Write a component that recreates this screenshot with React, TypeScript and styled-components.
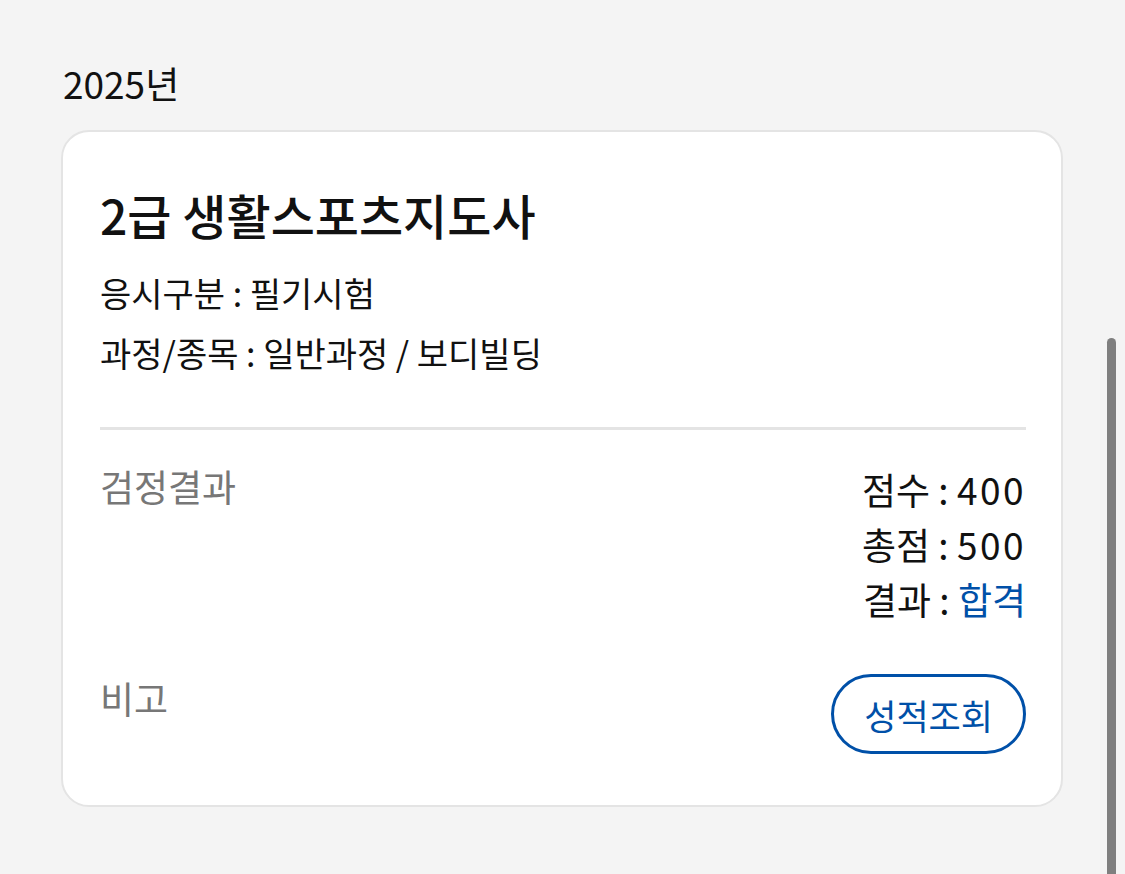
import React from 'react';
import styled, { createGlobalStyle } from 'styled-components';

const GlobalStyle = createGlobalStyle`
  html, body {
    margin: 0;
    padding: 0;
    background: #f4f4f4;
  }
  body {
    font-family: "Noto Sans CJK KR", "Noto Sans", sans-serif;
    color: #111;
  }
`;

const Page = styled.div`
  position: relative;
  min-height: 874px;
  padding: 54px 62px 0 61px;
  box-sizing: border-box;
  overflow: hidden;
`;

const YearTitle = styled.h2`
  margin: 0 0 18px 2px;
  font-size: 37px;
  font-weight: 400;
  line-height: 58px;
  color: #111;
`;

const Card = styled.section`
  background: #fff;
  border: 2px solid #e4e4e4;
  border-radius: 28px;
  padding: 52px 35px 51px 37px;
`;

const CourseName = styled.h3`
  margin: 0 0 19px;
  font-size: 48px;
  font-weight: 500;
  line-height: 60px;
  color: #111;
`;

const InfoLine = styled.p`
  margin: 0;
  font-size: 34px;
  line-height: 60px;
  color: #111;
`;

const Divider = styled.hr`
  margin: 44px 0 0;
  border: 0;
  border-top: 3px solid #e4e4e4;
`;

const Row = styled.div<{ $gap: number }>`
  display: flex;
  justify-content: space-between;
  align-items: flex-start;
  margin-top: ${(p) => p.$gap}px;
`;

const Label = styled.span`
  font-size: 37px;
  line-height: 48px;
  color: #777;
`;

const Values = styled.div`
  display: flex;
  flex-direction: column;
  align-items: flex-end;
`;

const ValueLine = styled.span`
  font-size: 37px;
  line-height: 55px;
  white-space: nowrap;
  color: #111;
`;

const Num = styled.span`
  letter-spacing: 2.5px;
`;

const Highlight = styled.span`
  color: #0050a8;
`;

const OutlineButton = styled.button`
  height: 80px;
  padding: 0 30px;
  border: 3px solid #0050a8;
  border-radius: 40px;
  background: #fff;
  color: #0050a8;
  font-family: inherit;
  font-size: 35px;
  line-height: 1;
  cursor: pointer;
`;

const ScrollThumb = styled.div`
  position: absolute;
  top: 338px;
  right: 9px;
  width: 9px;
  height: 560px;
  border-radius: 5px 5px 0 0;
  background: #7f7f7f;
`;

export default function App() {
  return (
    <>
      <GlobalStyle />
      <Page>
        <YearTitle>2025년</YearTitle>
        <Card>
          <CourseName>2급 생활스포츠지도사</CourseName>
          <InfoLine>응시구분 : 필기시험</InfoLine>
          <InfoLine>과정/종목 : 일반과정 / 보디빌딩</InfoLine>
          <Divider />
          <Row $gap={32}>
            <Label>검정결과</Label>
            <Values>
              <ValueLine>
                점수 : <Num>400</Num>
              </ValueLine>
              <ValueLine>
                총점 : <Num>500</Num>
              </ValueLine>
              <ValueLine>
                결과 : <Highlight>합격</Highlight>
              </ValueLine>
            </Values>
          </Row>
          <Row $gap={47}>
            <Label>비고</Label>
            <OutlineButton>성적조회</OutlineButton>
          </Row>
        </Card>
        <ScrollThumb />
      </Page>
    </>
  );
}
